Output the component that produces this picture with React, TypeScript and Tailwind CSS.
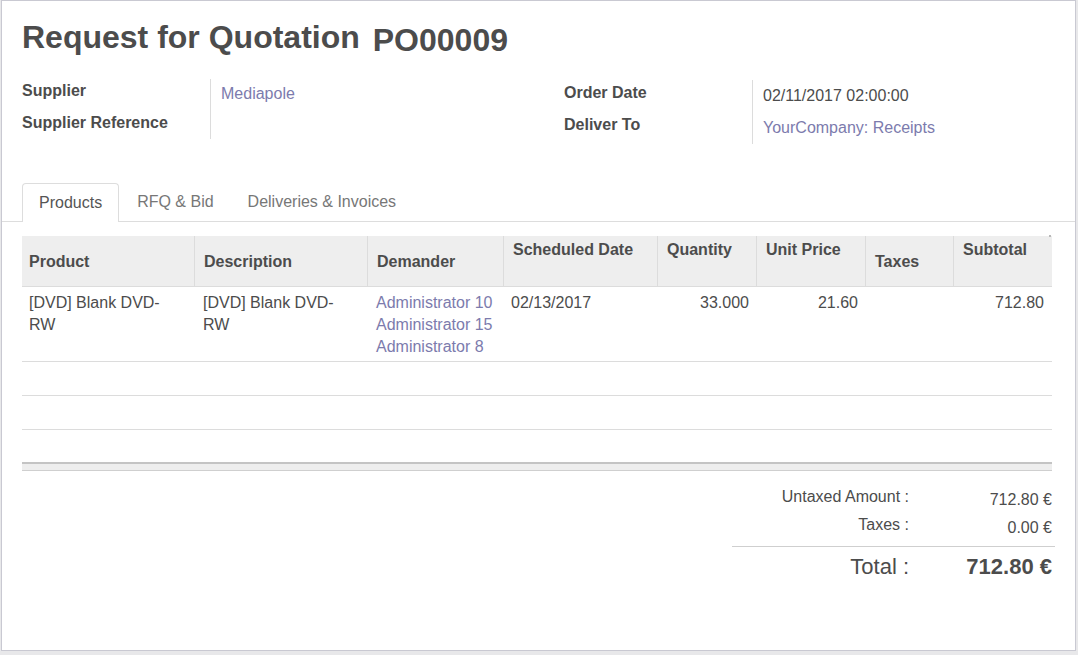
import React from "react";

const link = "text-[#7c7bad]";

function HeaderCell({ children, top, first, last }: { children: React.ReactNode; top?: boolean; first?: boolean; last?: boolean }) {
  return (
    <div
      className={`flex h-full ${top ? "items-start pt-[3px]" : "items-center pt-[2px]"} ${first ? "pl-[7px]" : "pl-[9px]"} pr-2 ${last ? "" : "border-r border-[#dcdcdc]"} font-bold leading-[22px]`}
    >
      {children}
    </div>
  );
}

export default function App() {
  const cols = "grid grid-cols-[173px_173px_136px_154px_99px_109px_88px_98px]";
  return (
    <div
      className="w-[1078px] h-[655px] bg-[#e8e8ea] text-[16px] text-[#4c4c4c] overflow-hidden"
      style={{ fontFamily: '"Liberation Sans", Arial, sans-serif' }}
    >
      <div className="ml-[1px] w-[1075px] h-[651px] bg-white border border-[#c9c9d2] flex flex-col">
        {/* Title */}
        <div className="flex items-start pl-[20px] pt-[16px] h-[56px] font-bold text-[32px] leading-[40px] text-[#4c4c4c]">
          <span>Request for Quotation</span>
          <span className="ml-[13px] pt-[3px]">PO00009</span>
        </div>

        {/* Fields */}
        <div className="grid grid-cols-[542px_1fr] pl-[20px] mt-[18px]">
          <div className="flex">
            <div className="w-[188px] font-bold leading-[32px]">
              <div>Supplier</div>
              <div>Supplier Reference</div>
            </div>
            <div className="border-l border-[#dcdcdc] mt-[4px] mb-[3px] pl-[10px] leading-[30px]">
              <div className={link}>Mediapole</div>
            </div>
          </div>
          <div className="flex mt-[2px]">
            <div className="w-[188px] font-bold leading-[32px]">
              <div>Order Date</div>
              <div>Deliver To</div>
            </div>
            <div className="border-l border-[#dcdcdc] mt-[3px] mb-[-2px] pl-[10px] leading-[32px]">
              <div>02/11/2017 02:00:00</div>
              <div className={link}>YourCompany: Receipts</div>
            </div>
          </div>
        </div>

        {/* Tabs */}
        <div className="mt-[41px] flex pl-[20px] border-b border-[#dddddd] h-[39px]">
          <div className="px-[16px] h-[39px] leading-[38px] border border-b-0 border-[#dddddd] rounded-t-[4px] bg-white text-[#555] mb-[-1px] relative">
            Products
          </div>
          <div className="ml-[2px] px-[16px] leading-[38px] text-[#777]">RFQ &amp; Bid</div>
          <div className="ml-[2px] px-[16px] leading-[38px] text-[#777]">Deliveries &amp; Invoices</div>
        </div>

        {/* Table */}
        <div className="ml-[20px] mt-[14px] w-[1030px] relative">
          <div className={`${cols} h-[51px] bg-[#eeeeee] border-b border-[#dcdcdc]`}>
            <HeaderCell first>Product</HeaderCell>
            <HeaderCell>Description</HeaderCell>
            <HeaderCell>Demander</HeaderCell>
            <HeaderCell top>Scheduled Date</HeaderCell>
            <HeaderCell top>Quantity</HeaderCell>
            <HeaderCell top>Unit Price</HeaderCell>
            <HeaderCell>Taxes</HeaderCell>
            <HeaderCell top last>Subtotal</HeaderCell>
          </div>
          <div className="absolute right-[1px] top-[-1px] w-[2px] h-[2px] bg-[#b8b8b8]" />
          <div className={`${cols} leading-[22px] pt-[5px] pb-[3px] border-b border-[#dcdcdc]`}>
            <div className="pl-[7px] pr-2">[DVD] Blank DVD-<br />RW</div>
            <div className="px-2">[DVD] Blank DVD-<br />RW</div>
            <div className={`px-2 ${link}`}>
              <div>Administrator 10</div>
              <div>Administrator 15</div>
              <div>Administrator 8</div>
            </div>
            <div className="px-[7px]">02/13/2017</div>
            <div className="px-2 text-right">33.000</div>
            <div className="px-2 text-right">21.60</div>
            <div className="px-2"></div>
            <div className="px-2 text-right">712.80</div>
          </div>
          <div className="h-[34px] border-b border-[#dcdcdc]" />
          <div className="h-[34px] border-b border-[#dcdcdc]" />
          <div className="h-[32px]" />
          <div className="h-[9px] bg-[#eeeeee] border-t-[2px] border-[#c4c4c4] border-b border-b-[#cfcfcf]" />
        </div>

        {/* Totals */}
        <div className="flex justify-end pr-[20px] mt-[15px]">
          <div className="w-[323px]">
            <div className="grid grid-cols-[177px_143px] h-[28px] leading-[22px]">
              <div className="text-right">Untaxed Amount :</div>
              <div className="text-right mt-[3px]">712.80 €</div>
            </div>
            <div className="grid grid-cols-[177px_143px] h-[28px] leading-[22px]">
              <div className="text-right">Taxes :</div>
              <div className="text-right mt-[3px]">0.00 €</div>
            </div>
            <div className="mt-[4px] border-t border-[#cfcfcf] pt-[7px] grid grid-cols-[177px_143px] text-[22px] leading-[26px]">
              <div className="text-right">Total :</div>
              <div className="text-right font-bold">712.80 €</div>
            </div>
          </div>
        </div>
      </div>
    </div>
  );
}
